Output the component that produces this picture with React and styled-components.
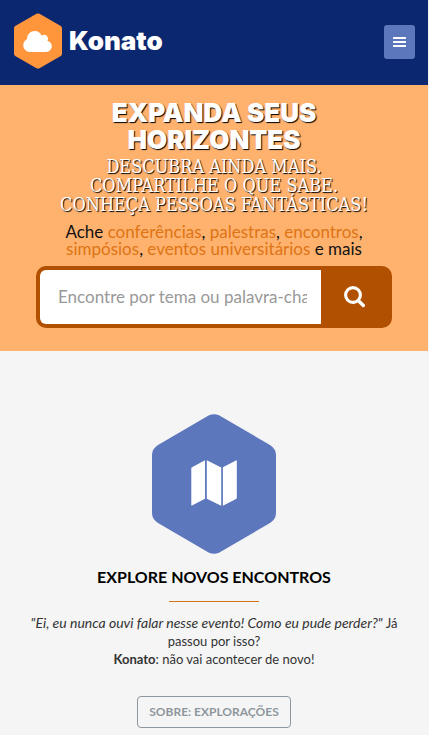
import React from "react";
import styled, { createGlobalStyle } from "styled-components";

const GlobalStyle = createGlobalStyle`
  *, *::before, *::after { box-sizing: border-box; }
  body {
    margin: 0;
    padding-right: 1px;
    background: #f5f5f5;
    color: #333;
    font-family: Lato, sans-serif;
  }
  html { scrollbar-width: none; }
`;

const Header = styled.header`
  display: flex;
  align-items: center;
  justify-content: space-between;
  padding: 13px 13px 16px 14px;
  background: #0b2770;
`;

const Brand = styled.a`
  display: flex;
  align-items: center;
  gap: 7px;
  color: #fff;
  font-family: Inter, sans-serif;
  font-size: 26px;
  font-weight: 900;
  line-height: 56px;
  text-decoration: none;
`;

const MenuButton = styled.button`
  display: flex;
  align-items: center;
  justify-content: center;
  width: 31px;
  height: 34px;
  margin-top: 2px;
  padding: 0;
  border: 0;
  border-radius: 3px;
  background: #5d77bc;
  color: #fff;
`;

const Hero = styled.section`
  padding: 14px 36px 23px;
  background: #ffb26e;
  text-align: center;
`;

const HeroTitle = styled.h1`
  margin: 0;
  color: #fff;
  font-family: Inter, sans-serif;
  font-size: 26px;
  font-weight: 900;
  line-height: 27px;
  text-shadow: 1px 1px 1px #000;
  text-transform: uppercase;
`;

const HeroTagline = styled.h2`
  margin: 4px 0 9px;
  color: #fff;
  font-family: "DejaVu Serif Condensed", "DejaVu Serif", serif;
  font-size: 18px;
  font-weight: 400;
  line-height: 19px;
  text-shadow: 1px 1px 1px #000;
  text-transform: uppercase;
  white-space: nowrap;
`;

const Topics = styled.p`
  margin: 0 0 9px;
  color: #111;
  font-size: 17px;
  line-height: 17px;
  white-space: nowrap;
`;

const TopicLink = styled.a`
  color: #de7414;
  text-decoration: none;
`;

const SearchForm = styled.form`
  display: flex;
  height: 62px;
  border: 4px solid #b05000;
  border-radius: 10px;
  background: #b05000;
`;

const SearchInput = styled.input`
  flex: 1;
  min-width: 0;
  padding: 0 14px 2px 18px;
  border: 0;
  border-radius: 6px 0 0 6px;
  background: #fff;
  color: #333;
  font-family: inherit;
  font-size: 17px;
  &::placeholder { color: #999; opacity: 1; }
`;

const SearchButton = styled.button`
  display: flex;
  align-items: center;
  justify-content: center;
  width: 67px;
  padding: 0;
  border: 0;
  background: transparent;
  color: #fff;
`;

const Feature = styled.section`
  display: flex;
  flex-direction: column;
  align-items: center;
  padding: 63px 24px 7px;
  text-align: center;
`;

const FeatureTitle = styled.h3`
  margin: 13px 0 0;
  color: #000;
  font-size: 16px;
  font-weight: 700;
  line-height: 20px;
  text-transform: uppercase;
`;

const Divider = styled.hr`
  width: 90px;
  height: 1px;
  margin: 14px 0 12px;
  border: 0;
  background: #d6741c;
`;

const FeatureText = styled.p`
  margin: 0;
  font-size: 13px;
  line-height: 18px;
  white-space: nowrap;
`;

const Quote = styled.em`
  font-size: 14px;
`;

const AboutLink = styled.a`
  margin-top: 28px;
  padding: 0 11px;
  border: 1px solid #8e979d;
  border-radius: 4px;
  color: #8e979d;
  font-size: 12px;
  font-weight: 700;
  line-height: 30px;
  text-decoration: none;
  text-transform: uppercase;
`;

const BrandMark = () => (
  <svg width="48" height="56" viewBox="0 0 48 56" aria-hidden="true">
    <path
      d="M22.500.8Q24 0 25.500.8L46.800 13Q48 13.800 48 15.200V40.800Q48 42.200 46.800 43L25.500 55.200Q24 56 22.500 55.200L1.200 43Q0 42.200 0 40.800V15.200Q0 13.800 1.200 13Z"
      fill="#ff963c"
    />
    <svg x="9" y="18" width="29" height="21" viewBox="-64 128 1920 1408">
      <path
        d="M1856 1152q0 159-112.500 271.500t-271.500 112.500h-1088q-185 0-316.500-131.500t-131.500-316.500q0-132 71-241.500t187-163.500q-2-28-2-43 0-212 150-362t362-150q158 0 286.500 88t187.500 230q70-62 166-62 106 0 181 75t75 181q0 75-41 138 129 30 213 134.500t84 239.500z"
        fill="#fff"
      />
    </svg>
  </svg>
);

const BarsIcon = () => (
  <svg width="13" height="11" viewBox="0 0 13 11" fill="currentColor" aria-hidden="true">
    <rect width="13" height="2" rx="0.5" />
    <rect y="4" width="13" height="2" rx="0.5" />
    <rect y="8" width="13" height="2" rx="0.5" />
  </svg>
);

const SearchIcon = () => (
  <svg width="21" height="22" viewBox="0 0 21 22" fill="none" stroke="currentColor" aria-hidden="true">
    <circle cx="9" cy="9" r="7.400" strokeWidth="3.100" />
    <path d="M14.500 14.700L19.300 19.500" strokeWidth="3.400" strokeLinecap="round" />
  </svg>
);

const MapBadge = () => (
  <svg width="124" height="140" viewBox="0 0 124 140" aria-hidden="true">
    <path
      d="M57 1.300Q62-1 67 1.300L118 31Q124 35 124 41V99Q124 105 118 109L67 138.700Q62 141 57 138.700L6 109Q0 105 0 99V41Q0 35 6 31Z"
      fill="#5d77bc"
    />
    <path
      d="M40 53.200L53 46.300V84.800L40 91.500Q39.300 91.700 39.300 91V54.300Q39.300 53.600 40 53.200ZM54.800 46.300L69.200 53.500V91.800L54.800 84.800ZM84 46.400Q84.800 46 84.800 46.900V84Q84.800 84.700 84 85.100L70.900 91.800V53.300Z"
      fill="#fff"
    />
  </svg>
);

export default function App() {
  return (
    <>
      <GlobalStyle />
      <Header>
        <Brand href="#">
          <BrandMark />
          Konato
        </Brand>
        <MenuButton type="button" aria-label="Menu">
          <BarsIcon />
        </MenuButton>
      </Header>
      <main>
        <Hero>
          <HeroTitle>
            Expanda seus
            <br />
            horizontes
          </HeroTitle>
          <HeroTagline>
            Descubra ainda mais.
            <br />
            Compartilhe o que sabe.
            <br />
            Conheça pessoas fantásticas!
          </HeroTagline>
          <Topics>
            Ache <TopicLink href="#">conferências</TopicLink>, <TopicLink href="#">palestras</TopicLink>,{" "}
            <TopicLink href="#">encontros</TopicLink>,
            <br />
            <TopicLink href="#">simpósios</TopicLink>, <TopicLink href="#">eventos universitários</TopicLink> e mais
          </Topics>
          <SearchForm role="search">
            <SearchInput
              type="text"
              aria-label="Encontre por tema ou palavra-chave"
              placeholder="Encontre por tema ou palavra-chave"
            />
            <SearchButton type="submit" aria-label="Buscar">
              <SearchIcon />
            </SearchButton>
          </SearchForm>
        </Hero>
        <Feature>
          <MapBadge />
          <FeatureTitle>Explore novos encontros</FeatureTitle>
          <Divider />
          <FeatureText>
            <Quote>"Ei, eu nunca ouvi falar nesse evento! Como eu pude perder?"</Quote> Já
            <br />
            passou por isso?
            <br />
            <strong>Konato</strong>: não vai acontecer de novo!
          </FeatureText>
          <AboutLink href="#">Sobre: Explorações</AboutLink>
        </Feature>
      </main>
    </>
  );
}
